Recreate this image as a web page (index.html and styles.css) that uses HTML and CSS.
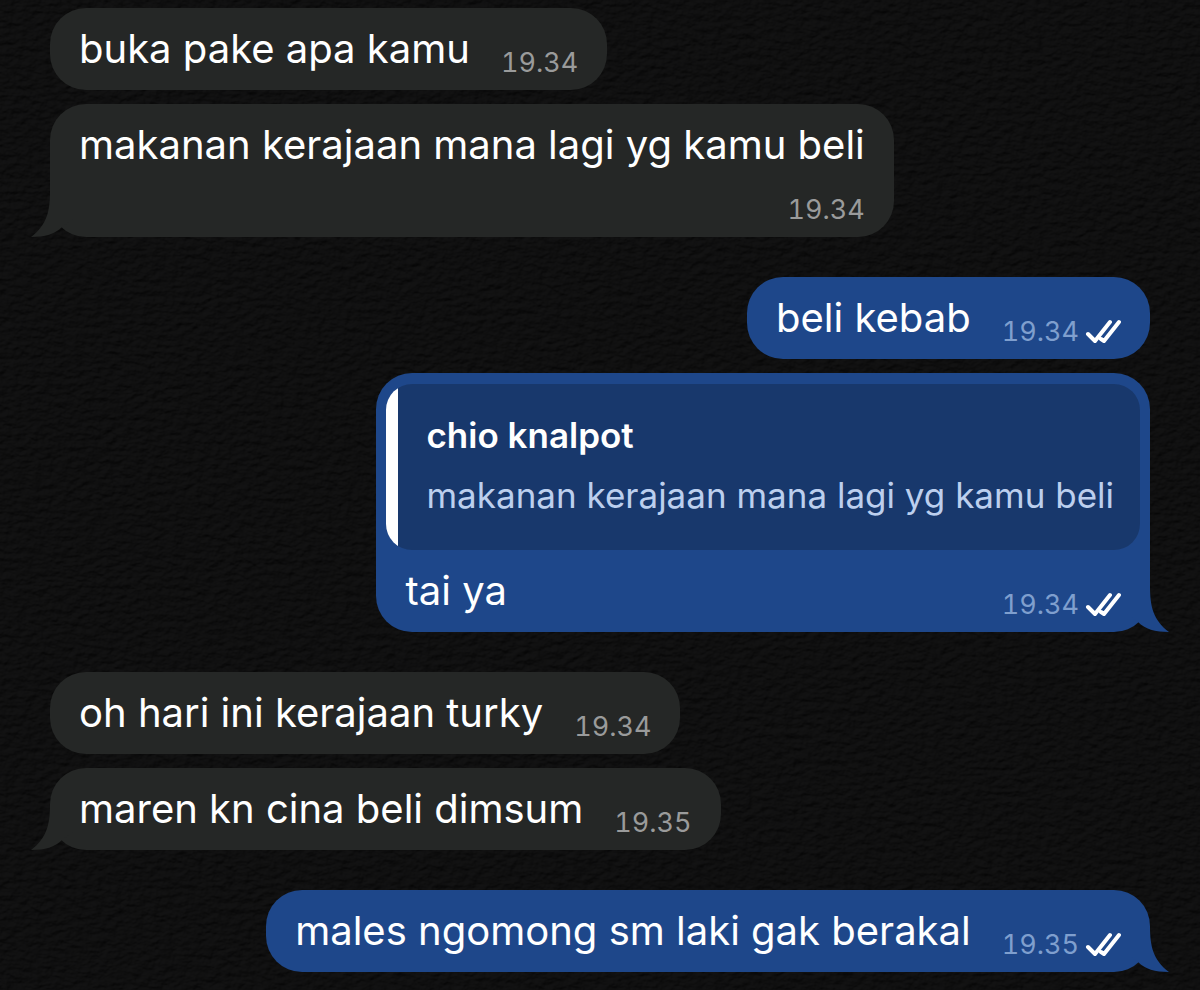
FILE: index.html
```
<!DOCTYPE html>
<html lang="id">
<head>
    <meta charset="UTF-8">
    <meta name="viewport" content="width=device-width, initial-scale=1.0">
    <title>Chat</title>
    <link rel="stylesheet" href="styles.css">
</head>
<body>

<svg class="wallpaper" aria-hidden="true">
    <defs>
        <filter id="paper" x="0" y="0" width="100%" height="100%" color-interpolation-filters="sRGB">
            <feTurbulence type="fractalNoise" baseFrequency="0.1 0.16" numOctaves="4" seed="21" result="noise"/>
            <feDiffuseLighting in="noise" surfaceScale="2" diffuseConstant="0.075" lighting-color="#fafaff">
                <feDistantLight azimuth="240" elevation="55"/>
            </feDiffuseLighting>
        </filter>
        <symbol id="ticks" viewBox="0 0 36 26">
            <path d="M3 15 L10 22 L25 3 M16 20 L19 22 L34 3"/>
        </symbol>
        <symbol id="tail" viewBox="0 0 60 46">
            <path d="M19 0 C19 20 16 34 0 46 C14 46 24 43 31 36 L45 26 L45 0 Z"/>
        </symbol>
    </defs>
    <rect width="100%" height="100%" filter="url(#paper)"/>
</svg>

<main class="chat">
    <section class="group received">
        <div class="bubble">
            <div class="content">
                <p class="text">buka pake apa kamu</p>
                <span class="meta"><time>19.34</time></span>
            </div>
        </div>
        <div class="bubble">
            <div class="content stacked">
                <p class="text">makanan kerajaan mana lagi yg kamu beli</p>
                <span class="meta"><time>19.34</time></span>
            </div>
            <svg class="tail"><use href="#tail"/></svg>
        </div>
    </section>

    <section class="group sent">
        <div class="bubble">
            <div class="content">
                <p class="text">beli kebab</p>
                <span class="meta"><time>19.34</time><svg class="ticks"><use href="#ticks"/></svg></span>
            </div>
        </div>
        <div class="bubble">
            <blockquote class="quote">
                <strong class="quote-name">chio knalpot</strong>
                <p class="quote-text">makanan kerajaan mana lagi yg kamu beli</p>
            </blockquote>
            <div class="content">
                <p class="text">tai ya</p>
                <span class="meta"><time>19.34</time><svg class="ticks"><use href="#ticks"/></svg></span>
            </div>
            <svg class="tail"><use href="#tail"/></svg>
        </div>
    </section>

    <section class="group received">
        <div class="bubble">
            <div class="content">
                <p class="text">oh hari ini kerajaan turky</p>
                <span class="meta"><time>19.34</time></span>
            </div>
        </div>
        <div class="bubble">
            <div class="content">
                <p class="text">maren kn cina beli dimsum</p>
                <span class="meta"><time>19.35</time></span>
            </div>
            <svg class="tail"><use href="#tail"/></svg>
        </div>
    </section>

    <section class="group sent">
        <div class="bubble">
            <div class="content">
                <p class="text">males ngomong sm laki gak berakal</p>
                <span class="meta"><time>19.35</time><svg class="ticks"><use href="#ticks"/></svg></span>
            </div>
            <svg class="tail"><use href="#tail"/></svg>
        </div>
    </section>
</main>

</body>
</html>
```

FILE: styles.css
```
* {
    box-sizing: border-box;
}
body {
    margin: 0;
    background-color: #0e0e0f;
    color: #fff;
    font-family: Inter, "Liberation Sans", sans-serif;
}
p {
    margin: 0;
}
.wallpaper {
    position: fixed;
    top: 0;
    left: 0;
    width: 100%;
    height: 100%;
    z-index: -1;
}
.chat {
    display: flex;
    flex-direction: column;
    gap: 40px;
    padding: 8px 50px 16px;
}
.group {
    display: flex;
    flex-direction: column;
    align-items: flex-start;
    gap: 14px;
}
.group.sent {
    align-items: flex-end;
}
.bubble {
    position: relative;
    border-radius: 36px;
    background-color: #252726;
    color: #252726;
}
.sent .bubble {
    background-color: #1e478a;
    color: #1e478a;
}
.content {
    display: flex;
    align-items: flex-end;
    justify-content: space-between;
    gap: 31px;
    padding: 16px 29px 11px;
}
.content.stacked {
    flex-direction: column;
    align-items: flex-end;
    gap: 19px;
}
.text {
    margin-bottom: 5px;
    color: #fff;
    font-size: 40px;
    line-height: 50px;
}
.meta {
    display: flex;
    align-items: center;
    gap: 6px;
    color: #9a9b9b;
    font-size: 27px;
    font-variant-numeric: tabular-nums;
    line-height: 32px;
}
.sent .meta {
    color: #7f9fce;
}
.ticks {
    width: 36px;
    height: 26px;
    fill: none;
    stroke: #fff;
    stroke-width: 4;
    stroke-linecap: round;
    stroke-linejoin: round;
}
.tail {
    position: absolute;
    bottom: 0;
    left: -19px;
    width: 60px;
    height: 46px;
    fill: currentColor;
}
.sent .tail {
    left: auto;
    right: -19px;
    transform: scaleX(-1);
}
.quote {
    margin: 11px 10px 0;
    padding: 27px 26px 31px 40px;
    border-radius: 26px;
    background: linear-gradient(to right, #fff 12px, #18386c 12px);
}
.quote-name {
    display: block;
    color: #fff;
    font-size: 35px;
    font-weight: 600;
    line-height: 48px;
}
.quote-text {
    margin-top: 12px;
    color: #bccfee;
    font-size: 35px;
    line-height: 48px;
}
```
